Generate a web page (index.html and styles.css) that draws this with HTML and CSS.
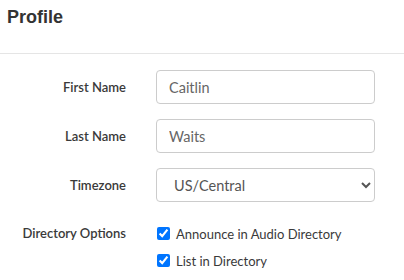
FILE: index.html
```html
<!DOCTYPE html>
<html lang="en">
<head>
  <meta charset="UTF-8">
  <title>Profile</title>
  <link rel="stylesheet" href="styles.css">
</head>
<body>
  <div class="header">
    <h1>Profile</h1>
  </div>

  <form class="profile-form">
    <div class="row">
      <label for="first-name">First Name</label>
      <input type="text" id="first-name" class="field" value="Caitlin">
    </div>
    <div class="row">
      <label for="last-name">Last Name</label>
      <input type="text" id="last-name" class="field" value="Waits">
    </div>
    <div class="row">
      <label for="timezone">Timezone</label>
      <select id="timezone" class="field select">
        <option>US/Central</option>
        <option>US/Eastern</option>
        <option>US/Pacific</option>
      </select>
    </div>
    <div class="row row-options">
      <label>Directory Options</label>
      <div class="options">
        <label class="check"><input type="checkbox" checked> Announce in Audio Directory</label>
        <label class="check"><input type="checkbox" checked> List in Directory</label>
      </div>
    </div>
  </form>
</body>
</html>
```

FILE: styles.css
```css
body {
  margin: 0;
  background: #fff;
  font-family: 'Lato', sans-serif;
  color: #333;
}

.header {
  height: 53px;
  border-bottom: 1px solid #e5e5e5;
}

h1 {
  margin: 0;
  padding: 7px 7px;
  font-family: 'Liberation Sans', Arial, sans-serif;
  font-size: 18px;
  font-weight: bold;
  color: #333;
}

.profile-form {
  padding-top: 16px;
}

.row {
  display: grid;
  grid-template-columns: 126px 219px;
  column-gap: 30px;
  align-items: center;
  margin-bottom: 15px;
}

.row > label {
  text-align: right;
  font-size: 13px;
  font-weight: 600;
  color: #3a3a3a;
}

.field {
  box-sizing: border-box;
  width: 219px;
  height: 34px;
  padding: 0 12px;
  border: 1px solid #ccc;
  border-radius: 4px;
  font-family: 'Lato', sans-serif;
  font-size: 14.5px;
  color: #666;
  background: #fff;
}

.select {
  padding-left: 13px;
  color: #555;
}

.row-options {
  align-items: start;
  margin-top: 18px;
}

.row-options > label {
  line-height: 27px;
}

.options {
  display: flex;
  flex-direction: column;
}

.check {
  display: flex;
  align-items: center;
  height: 27px;
  font-size: 13px;
  color: #3a3a3a;
}

.check input {
  margin: 0 6px 0 1px;
  width: 13px;
  height: 13px;
  accent-color: #0075ff;
}
```
